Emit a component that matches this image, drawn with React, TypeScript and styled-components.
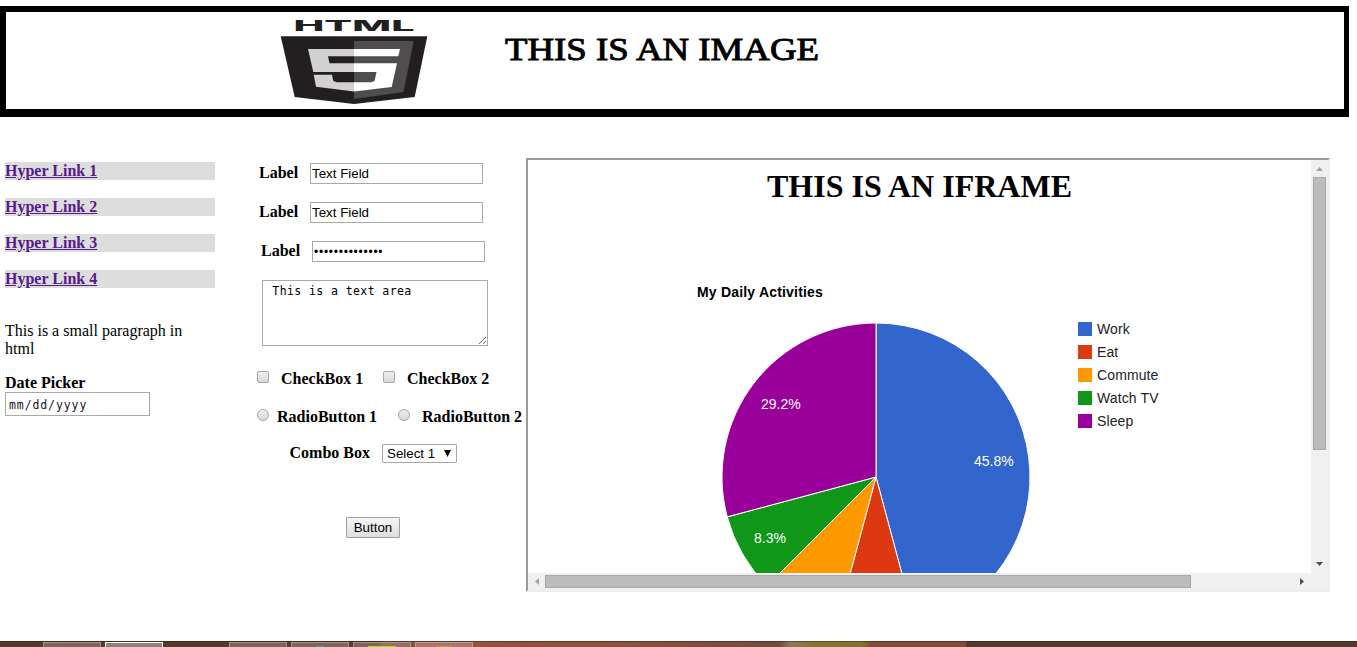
import React from "react";
import styled, { createGlobalStyle } from "styled-components";

const GlobalStyle = createGlobalStyle`
  *, *::before, *::after { box-sizing: border-box; }
  html, body { margin: 0; padding: 0; background: #fff; overflow: hidden; }
  body { font: 16px/18px "Liberation Serif", "Times New Roman", serif; color: #000; }
`;

const Page = styled.div`
  display: flex;
  flex-direction: column;
  width: 1357px;
  height: 647px;
  padding-top: 6px;
  overflow: hidden;
`;

const Banner = styled.header`
  flex: none;
  width: 1349px;
  height: 111px;
  border: solid #000;
  border-width: 6px 5px 8px 6px;
  padding-left: 272px;
`;

const BannerArt = styled.svg`
  display: block;
`;

const Main = styled.main`
  display: flex;
  flex: none;
  height: 524px;
  padding-top: 41px;
`;

const Sidebar = styled.aside`
  flex: none;
  width: 215px;
  padding: 4px 0 0 5px;
`;

const LinkList = styled.nav`
  display: flex;
  flex-direction: column;
  gap: 18px;
`;

const LinkRow = styled.div`
  height: 18px;
  background: #ddd;
  font-weight: bold;
`;

const Link = styled.a`
  color: #551a8b;
  text-decoration: underline;
`;

const Paragraph = styled.p`
  width: 200px;
  margin: 34px 0 16px;
`;

const BoldText = styled.label`
  display: block;
  font-weight: bold;
  white-space: nowrap;
`;

const DateField = styled.div`
  width: 145px;
  height: 24px;
  padding: 0 0 0 3px;
  border: 1px solid #a9a9a9;
  color: #1c1030;
  font: 11.5px/25px "DejaVu Sans Mono", monospace;
  letter-spacing: 0.9px;
`;

const Form = styled.form`
  flex: none;
  width: 311px;
  padding: 5px 0 0 42px;
`;

const Field = styled.div<{ $indent?: number }>`
  display: flex;
  height: 21px;
  margin-bottom: 18px;
  padding-left: ${(p) => p.$indent ?? 2}px;
`;

const FieldLabel = styled(BoldText)`
  width: 51px;
  padding-top: 1px;
`;

const TextInput = styled.input`
  width: 173px;
  height: 21px;
  margin: 0;
  padding: 1px;
  border: 1px solid #a9a9a9;
  border-radius: 0;
  outline: 0;
  background: #fff;
  color: #000;
  font: 13.33px "Liberation Sans", Arial, sans-serif;

  &[type="password"] {
    font-size: 12px;
    letter-spacing: 0.75px;
  }
`;

const TextArea = styled.textarea`
  display: block;
  width: 226px;
  height: 66px;
  margin: 0 0 0 5px;
  padding: 3px 2px;
  border: 1px solid #a9a9a9;
  border-radius: 0;
  outline: 0;
  resize: vertical;
  font: 11.5px/15px "DejaVu Sans Mono", monospace;
  letter-spacing: 0.41px;
`;

const Options = styled.div<{ $top: number }>`
  display: flex;
  height: 18px;
  margin-top: ${(p) => p.$top}px;
`;

const Option = styled.div<{ $width: number; $gap: number }>`
  display: flex;
  flex: none;
  gap: ${(p) => p.$gap}px;
  width: ${(p) => p.$width}px;
`;

const Mark = styled.input`
  appearance: none;
  flex: none;
  width: 12px;
  height: 12px;
  margin: 1px 0 0;
  border: 1px solid #a6a6a6;
  border-radius: ${(p) => (p.type === "radio" ? "50%" : "2px")};
  background: linear-gradient(#eee, #d9d9d9);
`;

const ComboRow = styled.div`
  display: flex;
  height: 19px;
  margin-top: 18px;
  padding-left: 32.5px;
`;

const ComboLabel = styled(BoldText)`
  width: 92.5px;
`;

const Select = styled.div`
  display: flex;
  align-items: center;
  justify-content: space-between;
  width: 75px;
  height: 19px;
  padding: 0 5px 0 4px;
  border: 1px solid #a6a6a6;
  border-radius: 1px;
  font: 13.33px/17px "Liberation Sans", Arial, sans-serif;
`;

const Button = styled.button`
  display: block;
  width: 54px;
  height: 21px;
  margin: 54px 0 0 89px;
  padding: 0;
  border: 1px solid #a0a0a0;
  border-radius: 1px;
  background: linear-gradient(#f6f6f6, #dedede);
  color: #000;
  font: 13.33px/17px "Liberation Sans", Arial, sans-serif;
`;

const Frame = styled.section`
  display: grid;
  grid-template: 413px 17px / 783px 17px;
  width: 804px;
  height: 434px;
  border: 2px solid;
  border-color: #9a9a9a #eee #eee #9a9a9a;
`;

const FrameBody = styled.div`
  overflow: hidden;
  padding-top: 8px;
`;

const FrameTitle = styled.h1`
  height: 37px;
  margin: 0;
  text-align: center;
  font-size: 32px;
  line-height: 37px;
`;

const Chart = styled.figure`
  display: grid;
  grid-template: 39px auto / 381px auto;
  margin: 79px 0 0 169px;
  font: 14px/16px "Liberation Sans", Arial, sans-serif;
`;

const ChartTitle = styled.figcaption`
  grid-column: 1 / 3;
  font-weight: bold;
  letter-spacing: 0.19px;
`;

const Pie = styled.svg`
  display: block;
  margin-left: 24px;
  margin-top: -1px;
`;

const Legend = styled.ul`
  display: flex;
  flex-direction: column;
  gap: 7px;
  margin: -2px 0 0;
  padding: 0;
  list-style: none;
`;

const LegendItem = styled.li`
  display: flex;
  align-items: center;
  gap: 5px;
  height: 16px;
  color: #222;
  letter-spacing: 0.12px;
`;

const Swatch = styled.i<{ $color: string }>`
  width: 14px;
  height: 14px;
  background: ${(p) => p.$color};
`;

const Track = styled.div<{ $vertical?: boolean }>`
  display: flex;
  flex-direction: ${(p) => (p.$vertical ? "column" : "row")};
  align-items: center;
  background: #f0f0f0;
`;

const Thumb = styled.div<{ $w: number; $h: number }>`
  flex: none;
  width: ${(p) => p.$w}px;
  height: ${(p) => p.$h}px;
  border: 1px solid #a8a8a8;
  background: #bcbcbc;
`;

const Spacer = styled.div`
  flex: 1;
`;

const Corner = styled.div`
  background: #f0f0f0;
`;

const ArrowBox = styled.svg`
  display: block;
  flex: none;
`;

const Taskbar = styled.footer`
  display: flex;
  flex: none;
  gap: 4px;
  height: 6px;
  padding: 1px 0 0 43px;
  background:
    linear-gradient(rgba(40, 25, 20, 0.45) 1px, transparent 1px),
    linear-gradient(90deg, #57382a 0, #57382a 380px, #8c503c 382px, #95523e 480px, #8a503d 660px,
      #744b3c 780px, #92785b 790px, #8d7748 800px, #897331 812px, #847030 862px, #834a37 872px,
      #824a37 966px, #57392c 967px);
`;

const Task = styled.div<{ $active?: boolean; $warm?: boolean; $after?: number }>`
  display: flex;
  justify-content: center;
  flex: none;
  width: 58px;
  height: 8px;
  margin-right: ${(p) => p.$after ?? 0}px;
  padding-top: 3px;
  border: 1px solid ${(p) => (p.$active ? "#fff" : p.$warm ? "#c39a8d" : "#a59489")};
  background: ${(p) => (p.$active ? "#938077" : p.$warm ? "#ab7464" : "rgba(160,135,125,0.55)")};
`;

const TaskIcon = styled.i<{ $color: string; $width: number }>`
  width: ${(p) => p.$width}px;
  height: 4px;
  background: ${(p) => p.$color};
`;

const slices = [
  { name: "Work", hours: 11, color: "#3366cc" },
  { name: "Eat", hours: 2, color: "#dc3912" },
  { name: "Commute", hours: 2, color: "#ff9900" },
  { name: "Watch TV", hours: 2, color: "#109618" },
  { name: "Sleep", hours: 7, color: "#990099" },
];

const shares = [
  { text: "45.8%", x: 253, y: 144 },
  { text: "29.2%", x: 40, y: 87 },
  { text: "8.3%", x: 33, y: 221 },
];

function arcs() {
  const c = 155;
  const r = 154;
  let start = 0;
  return slices.map((s) => {
    const end = start + (s.hours / 24) * Math.PI * 2;
    const d = `M${c} ${c}L${c + r * Math.sin(start)} ${c - r * Math.cos(start)}A${r} ${r} 0 0 1 ${
      c + r * Math.sin(end)
    } ${c - r * Math.cos(end)}Z`;
    start = end;
    return { d, color: s.color };
  });
}

const Arrow = ({ dir }: { dir: "up" | "down" | "left" | "right" }) => {
  const turn = { up: 0, right: 90, down: 180, left: 270 }[dir];
  const dim = dir === "up" || dir === "left";
  return (
    <ArrowBox width="17" height="17" viewBox="0 0 17 17">
      <path d="M5 11L8.5 7L12 11Z" fill={dim ? "#a3a3a3" : "#505050"} transform={`rotate(${turn} 8.5 8.5)`} />
    </ArrowBox>
  );
};

export default function App() {
  return (
    <>
      <GlobalStyle />
      <Page>
        <Banner>
          <BannerArt width="560" height="97" viewBox="278 12 560 97">
            <text x="293.5" y="30.5" fontFamily="Inter, sans-serif" fontWeight="800" fontSize="14" fill="#231f20" textLength="121" lengthAdjust="spacingAndGlyphs">HTML</text>
            <path d="M280.7 36.3H427.3L414.7 97L354 104L294.7 97Z" fill="#231f20" />
            <path d="M354 41H413.7L403.5 92L354 99Z" fill="#4f4d4e" />
            <path d="M308 49H354V56.3H328L329.5 63.3H354V72H313.3ZM313.7 74.7H332L333.3 81L337 82.3H354V91.6L316 86.8Z" fill="#d1d1d1" />
            <path d="M354 49H400L398.3 56.3H354ZM354 63.3H397L391.7 87L354 91.6V82.3H371L374.5 81L376.5 72H354Z" fill="#fff" />
            <text x="505" y="60.3" fontFamily="'Liberation Serif', serif" fontSize="31" stroke="#000" strokeWidth=".9" textLength="314" lengthAdjust="spacingAndGlyphs">THIS IS AN IMAGE</text>
          </BannerArt>
        </Banner>
        <Main>
          <Sidebar>
            <LinkList>
              {[1, 2, 3, 4].map((n) => (
                <LinkRow key={n}><Link href="#">Hyper Link {n}</Link></LinkRow>
              ))}
            </LinkList>
            <Paragraph>This is a small paragraph in html</Paragraph>
            <BoldText>Date Picker</BoldText>
            <DateField>mm/dd/yyyy</DateField>
          </Sidebar>
          <Form>
            <Field><FieldLabel>Label</FieldLabel><TextInput defaultValue="Text Field" /></Field>
            <Field><FieldLabel>Label</FieldLabel><TextInput defaultValue="Text Field" /></Field>
            <Field $indent={4}><FieldLabel>Label</FieldLabel><TextInput type="password" defaultValue="password123456" /></Field>
            <TextArea defaultValue=" This is a text area" />
            <Options $top={24}>
              <Option $width={126} $gap={12}><Mark type="checkbox" /><BoldText>CheckBox 1</BoldText></Option>
              <Option $width={126} $gap={12}><Mark type="checkbox" /><BoldText>CheckBox 2</BoldText></Option>
            </Options>
            <Options $top={20}>
              <Option $width={141} $gap={8}><Mark type="radio" /><BoldText>RadioButton 1</BoldText></Option>
              <Option $width={126} $gap={12}><Mark type="radio" /><BoldText>RadioButton 2</BoldText></Option>
            </Options>
            <ComboRow>
              <ComboLabel>Combo Box</ComboLabel>
              <Select>
                Select 1
                <svg width="7" height="8" viewBox="0 0 7 8"><path d="M0 0H7L3.5 7Z" /></svg>
              </Select>
            </ComboRow>
            <Button type="button">Button</Button>
          </Form>
          <Frame>
            <FrameBody>
              <FrameTitle>THIS IS AN IFRAME</FrameTitle>
              <Chart>
                <ChartTitle>My Daily Activities</ChartTitle>
                <Pie width="310" height="310" viewBox="0 0 310 310">
                  {arcs().map((a) => <path key={a.color} d={a.d} fill={a.color} stroke="#fff" />)}
                  {shares.map((s) => <text key={s.text} x={s.x} y={s.y} fill="#fff">{s.text}</text>)}
                </Pie>
                <Legend>
                  {slices.map((s) => <LegendItem key={s.name}><Swatch $color={s.color} />{s.name}</LegendItem>)}
                </Legend>
              </Chart>
            </FrameBody>
            <Track $vertical><Arrow dir="up" /><Thumb $w={13} $h={273} /><Spacer /><Arrow dir="down" /></Track>
            <Track><Arrow dir="left" /><Thumb $w={646} $h={13} /><Spacer /><Arrow dir="right" /></Track>
            <Corner />
          </Frame>
        </Main>
        <Taskbar>
          <Task />
          <Task $active $after={62} />
          <Task />
          <Task><TaskIcon $color="#72899a" $width={8} /></Task>
          <Task><TaskIcon $color="#a4e600" $width={28} /></Task>
          <Task $warm><TaskIcon $color="#b99a4a" $width={16} /></Task>
        </Taskbar>
      </Page>
    </>
  );
}
